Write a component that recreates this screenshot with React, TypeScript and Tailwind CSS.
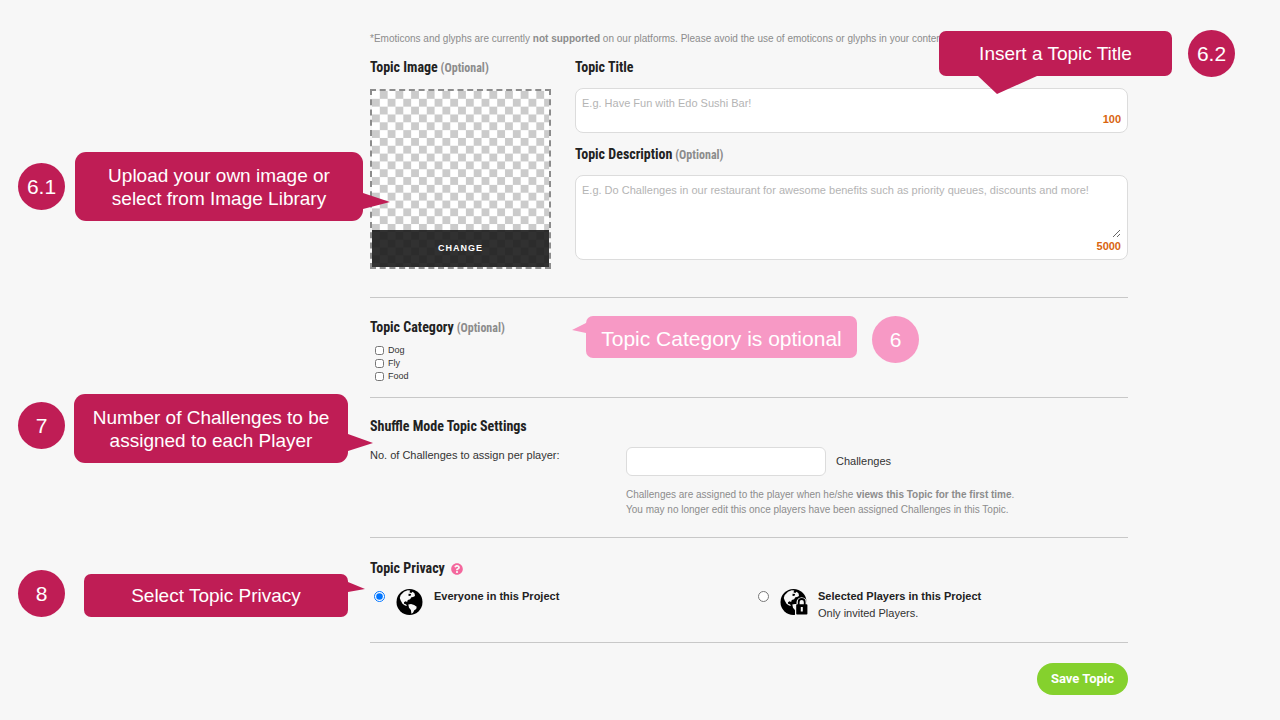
import React, { useState } from "react";
import clsx from "clsx";
import { FaQuestionCircle } from "react-icons/fa";

const CATEGORIES = ["Dog", "Fly", "Food"];

function Heading({ children, optional, htmlFor }: { children: React.ReactNode; optional?: boolean; htmlFor?: string }) {
  const Tag = htmlFor ? "label" : "h2";
  return (
    <Tag
      htmlFor={htmlFor}
      className="block font-['Roboto_Condensed','Liberation_Sans',sans-serif] text-[14px] leading-5 font-bold text-[#222]"
    >
      {children}
      {optional && <span className="text-[12px] leading-none text-[#8c8c8c]"> (Optional)</span>}
    </Tag>
  );
}

function Checkerboard() {
  return (
    <svg className="absolute inset-0 size-full" aria-hidden="true">
      <defs>
        <pattern id="checker" width="15.65" height="15.65" patternUnits="userSpaceOnUse">
          <rect width="15.65" height="15.65" fill="#fff" />
          <rect x="7.82" width="7.83" height="7.83" fill="#cbcbcb" />
          <rect y="7.82" width="7.83" height="7.83" fill="#cbcbcb" />
        </pattern>
      </defs>
      <rect width="100%" height="100%" fill="url(#checker)" />
    </svg>
  );
}

function Globe({ locked }: { locked?: boolean }) {
  return (
    <svg viewBox="0 0 28 28" className="size-7 shrink-0" aria-hidden="true">
      <circle cx="13.5" cy="14" r="13" fill="#000" />
      <path
        fill="#f7f7f7"
        d="M4.600 7.200 8 3.700l3.700-1.400 2.600.300-.9 1.700 1.800.7 1.500-1.200 1.900 1.700.4 2.600-1.900.9-1.700.3-1.300 2-2.300.8-.7 1.900-1.500-.7-1.700.9.4 1.700 1.700.4.9 1.800-1.900-.7-2.500-1.600-1.800-3.200-.9-2.700z"
      />
      <path fill="#000" d="m12.500 5.800 2.600.3-.5 1.600-2 .2z" />
      <path fill="#f7f7f7" d="m12.300 16.500 2.700-.6 3.100 1.200 2.600 1.600-.5 2.400-1.900 1.200-1.300 2.400-1.600 1.100-.5-3.700-1.900-2.300z" />
      {locked && (
        <>
          <path d="M15 28V16H16.500V14.500a5.200 5.200 0 0 1 10.400 0V16H28V28z" fill="#f7f7f7" />
          <path d="M18.700 17V14a3 3 0 0 1 6 0v3" fill="none" stroke="#000" strokeWidth="1.800" />
          <rect x="16.200" y="16.300" width="11.200" height="10.200" rx=".8" fill="#000" />
          <path d="M20.800 19h2v4.500h-2z" fill="#f7f7f7" />
        </>
      )}
    </svg>
  );
}

type CalloutProps = {
  className: string;
  tail: string;
  tailBox: string;
  tailClass: string;
  children: React.ReactNode;
};

function Callout({ className, tail, tailBox, tailClass, children }: CalloutProps) {
  return (
    <div className={clsx("absolute flex items-center justify-center text-center text-white", className)}>
      <p>{children}</p>
      <svg viewBox={tailBox} className={clsx("absolute", tailClass)} fill="currentColor" aria-hidden="true">
        <polygon points={tail} />
      </svg>
    </div>
  );
}

function Step({ className, children }: { className: string; children: React.ReactNode }) {
  return (
    <div className={clsx("absolute flex size-[47px] items-center justify-center rounded-full text-[21px] text-white", className)}>
      {children}
    </div>
  );
}

export default function App() {
  const [title, setTitle] = useState("");
  const [description, setDescription] = useState("");
  const [privacy, setPrivacy] = useState("everyone");

  return (
    <div className="relative min-h-screen bg-[#f7f7f7] font-['Liberation_Sans',Arial,sans-serif] text-[#333]">
      <form className="pt-[33px] pr-[152px] pb-6 pl-[370px]" onSubmit={(e) => e.preventDefault()}>
        <p className="text-[10px] leading-3 text-[#8c8c8c]">
          *Emoticons and glyphs are currently <b>not supported</b> on our platforms. Please avoid the use of emoticons or
          glyphs in your content.
        </p>

        <section className="mt-3 flex gap-6 border-b border-[#c8c8c8] pb-7">
          <div className="w-[181px] shrink-0">
            <Heading optional>Topic Image</Heading>
            <div className="relative mt-3 flex h-[180px] flex-col justify-end border-2 border-dashed border-[#8c8c8c]">
              <Checkerboard />
              <button
                type="button"
                className="relative h-[37px] bg-[#1b1b1b]/90 text-[9px] font-bold tracking-[1px] text-white"
              >
                CHANGE
              </button>
            </div>
          </div>

          <div className="min-w-0 flex-1">
            <Heading htmlFor="title">Topic Title</Heading>
            <div className="mt-[11px] rounded-lg border border-[#dcdcdc] bg-white px-1.5 pt-1.5 pb-1">
              <input
                id="title"
                value={title}
                maxLength={100}
                onChange={(e) => setTitle(e.target.value)}
                placeholder="E.g. Have Fun with Edo Sushi Bar!"
                className="block h-4 w-full text-[11px] outline-none placeholder:text-[#b4b4b4]"
              />
              <div className="text-right text-[11px] leading-[17px] font-bold text-[#d9640f]">{100 - title.length}</div>
            </div>

            <div className="mt-[11px]">
              <Heading htmlFor="description" optional>
                Topic Description
              </Heading>
            </div>
            <div className="mt-[11px] rounded-lg border border-[#dcdcdc] bg-white px-1.5 pt-1.5 pb-1">
              <textarea
                id="description"
                value={description}
                maxLength={5000}
                onChange={(e) => setDescription(e.target.value)}
                placeholder="E.g. Do Challenges in our restaurant for awesome benefits such as priority queues, discounts and more!"
                className="block h-14 w-full resize text-[11px] leading-4 outline-none placeholder:text-[#b4b4b4]"
              />
              <div className="text-right text-[11px] leading-[17px] font-bold text-[#d9640f]">
                {5000 - description.length}
              </div>
            </div>
          </div>
        </section>

        <section className="border-b border-[#c8c8c8] pt-[19px] pb-3.5">
          <Heading optional>Topic Category</Heading>
          <ul className="mt-[7px] pl-[5px]">
            {CATEGORIES.map((name) => (
              <li key={name}>
                <label className="flex items-center gap-1 text-[9px] leading-[13px]">
                  <input type="checkbox" className="size-[9px]" />
                  {name}
                </label>
              </li>
            ))}
          </ul>
        </section>

        <section className="border-b border-[#c8c8c8] pt-[18px] pb-5">
          <Heading>Shuffle Mode Topic Settings</Heading>
          <div className="mt-[11px] flex">
            <label htmlFor="count" className="w-64 shrink-0 text-[11px] leading-4">
              No. of Challenges to assign per player:
            </label>
            <div>
              <div className="flex items-center gap-2.5 text-[11px]">
                <input id="count" className="h-[29px] w-[200px] rounded-md border border-[#dcdcdc] bg-white px-2 outline-none" />
                <span>Challenges</span>
              </div>
              <p className="mt-[11px] text-[10px] leading-[15px] text-[#8c8c8c]">
                Challenges are assigned to the player when he/she <b>views this Topic for the first time</b>.
                <br />
                You may no longer edit this once players have been assigned Challenges in this Topic.
              </p>
            </div>
          </div>
        </section>

        <section className="border-b border-[#c8c8c8] pt-5 pb-5">
          <div className="flex items-center gap-1.5">
            <Heading>Topic Privacy</Heading>
            <button type="button" aria-label="Help" className="pt-0.5 text-[#f4679d]">
              <FaQuestionCircle className="size-3" />
            </button>
          </div>
          <div className="mt-2.5 grid grid-cols-2 text-[11px]">
            <label className="flex items-start pl-1">
              <input
                type="radio"
                name="privacy"
                checked={privacy === "everyone"}
                onChange={() => setPrivacy("everyone")}
                className="mt-[3px] mr-[11px] size-[11px]"
              />
              <Globe />
              <b className="ml-2.5 leading-[17px] text-[#222]">Everyone in this Project</b>
            </label>
            <label className="flex items-start pl-[9px]">
              <input
                type="radio"
                name="privacy"
                checked={privacy === "selected"}
                onChange={() => setPrivacy("selected")}
                className="mt-[3px] mr-[11px] size-[11px]"
              />
              <Globe locked />
              <span className="ml-2.5 leading-[17px]">
                <b className="text-[#222]">Selected Players in this Project</b>
                <br />
                Only invited Players.
              </span>
            </label>
          </div>
        </section>

        <div className="mt-5 flex justify-end">
          <button type="submit" className="h-8 rounded-full bg-[#85d12d] px-3.5 font-['Roboto',sans-serif] text-[13px] font-bold text-white">
            Save Topic
          </button>
        </div>
      </form>

      {/* Walkthrough notes laid over the form */}
      <Step className="top-[30px] left-[1188px] bg-[#bf1d55]">6.2</Step>
      <Callout
        className="top-[31px] left-[939px] h-[45px] w-[233px] rounded-[7px] bg-[#bf1d55] text-[19px] leading-6"
        tailBox="0 0 59 18"
        tail="0,0 59,0 19,18"
        tailClass="top-full left-[39px] h-[18px] w-[59px] text-[#bf1d55]"
      >
        Insert a Topic Title
      </Callout>

      <Step className="top-[163px] left-[18px] bg-[#bf1d55]">6.1</Step>
      <Callout
        className="top-[152px] left-[75px] h-[69px] w-[288px] rounded-[11px] bg-[#bf1d55] text-[19px] leading-[23px]"
        tailBox="0 0 27 16"
        tail="0,0 27,9 0,16"
        tailClass="top-[41px] left-full h-4 w-[27px] text-[#bf1d55]"
      >
        Upload your own image or
        <br />
        select from Image Library
      </Callout>

      <Callout
        className="top-[316px] left-[586px] h-[42px] w-[271px] rounded-[7px] bg-[#f799c5] pt-1 text-[21px] leading-6"
        tailBox="0 0 14 10"
        tail="14,0 0,7 14,10"
        tailClass="top-[7px] right-full h-[10px] w-[14px] text-[#f799c5]"
      >
        Topic Category is optional
      </Callout>
      <Step className="top-[316px] left-[872px] bg-[#f799c5]">6</Step>

      <Step className="top-[402px] left-[18px] bg-[#bf1d55]">7</Step>
      <Callout
        className="top-[394px] left-[74px] h-[69px] w-[274px] rounded-[11px] bg-[#bf1d55] text-[19px] leading-[23px]"
        tailBox="0 0 25 17"
        tail="0,0 25,9 0,17"
        tailClass="top-[40px] left-full h-[17px] w-[25px] text-[#bf1d55]"
      >
        Number of Challenges to be
        <br />
        assigned to each Player
      </Callout>

      <Step className="top-[570px] left-[18px] bg-[#bf1d55]">8</Step>
      <Callout
        className="top-[574px] left-[84px] h-[43px] w-[264px] rounded-[7px] bg-[#bf1d55] text-[19px] leading-6"
        tailBox="0 0 17 10"
        tail="0,0 17,7 0,10"
        tailClass="top-[8px] left-full h-[10px] w-[17px] text-[#bf1d55]"
      >
        Select Topic Privacy
      </Callout>
    </div>
  );
}
